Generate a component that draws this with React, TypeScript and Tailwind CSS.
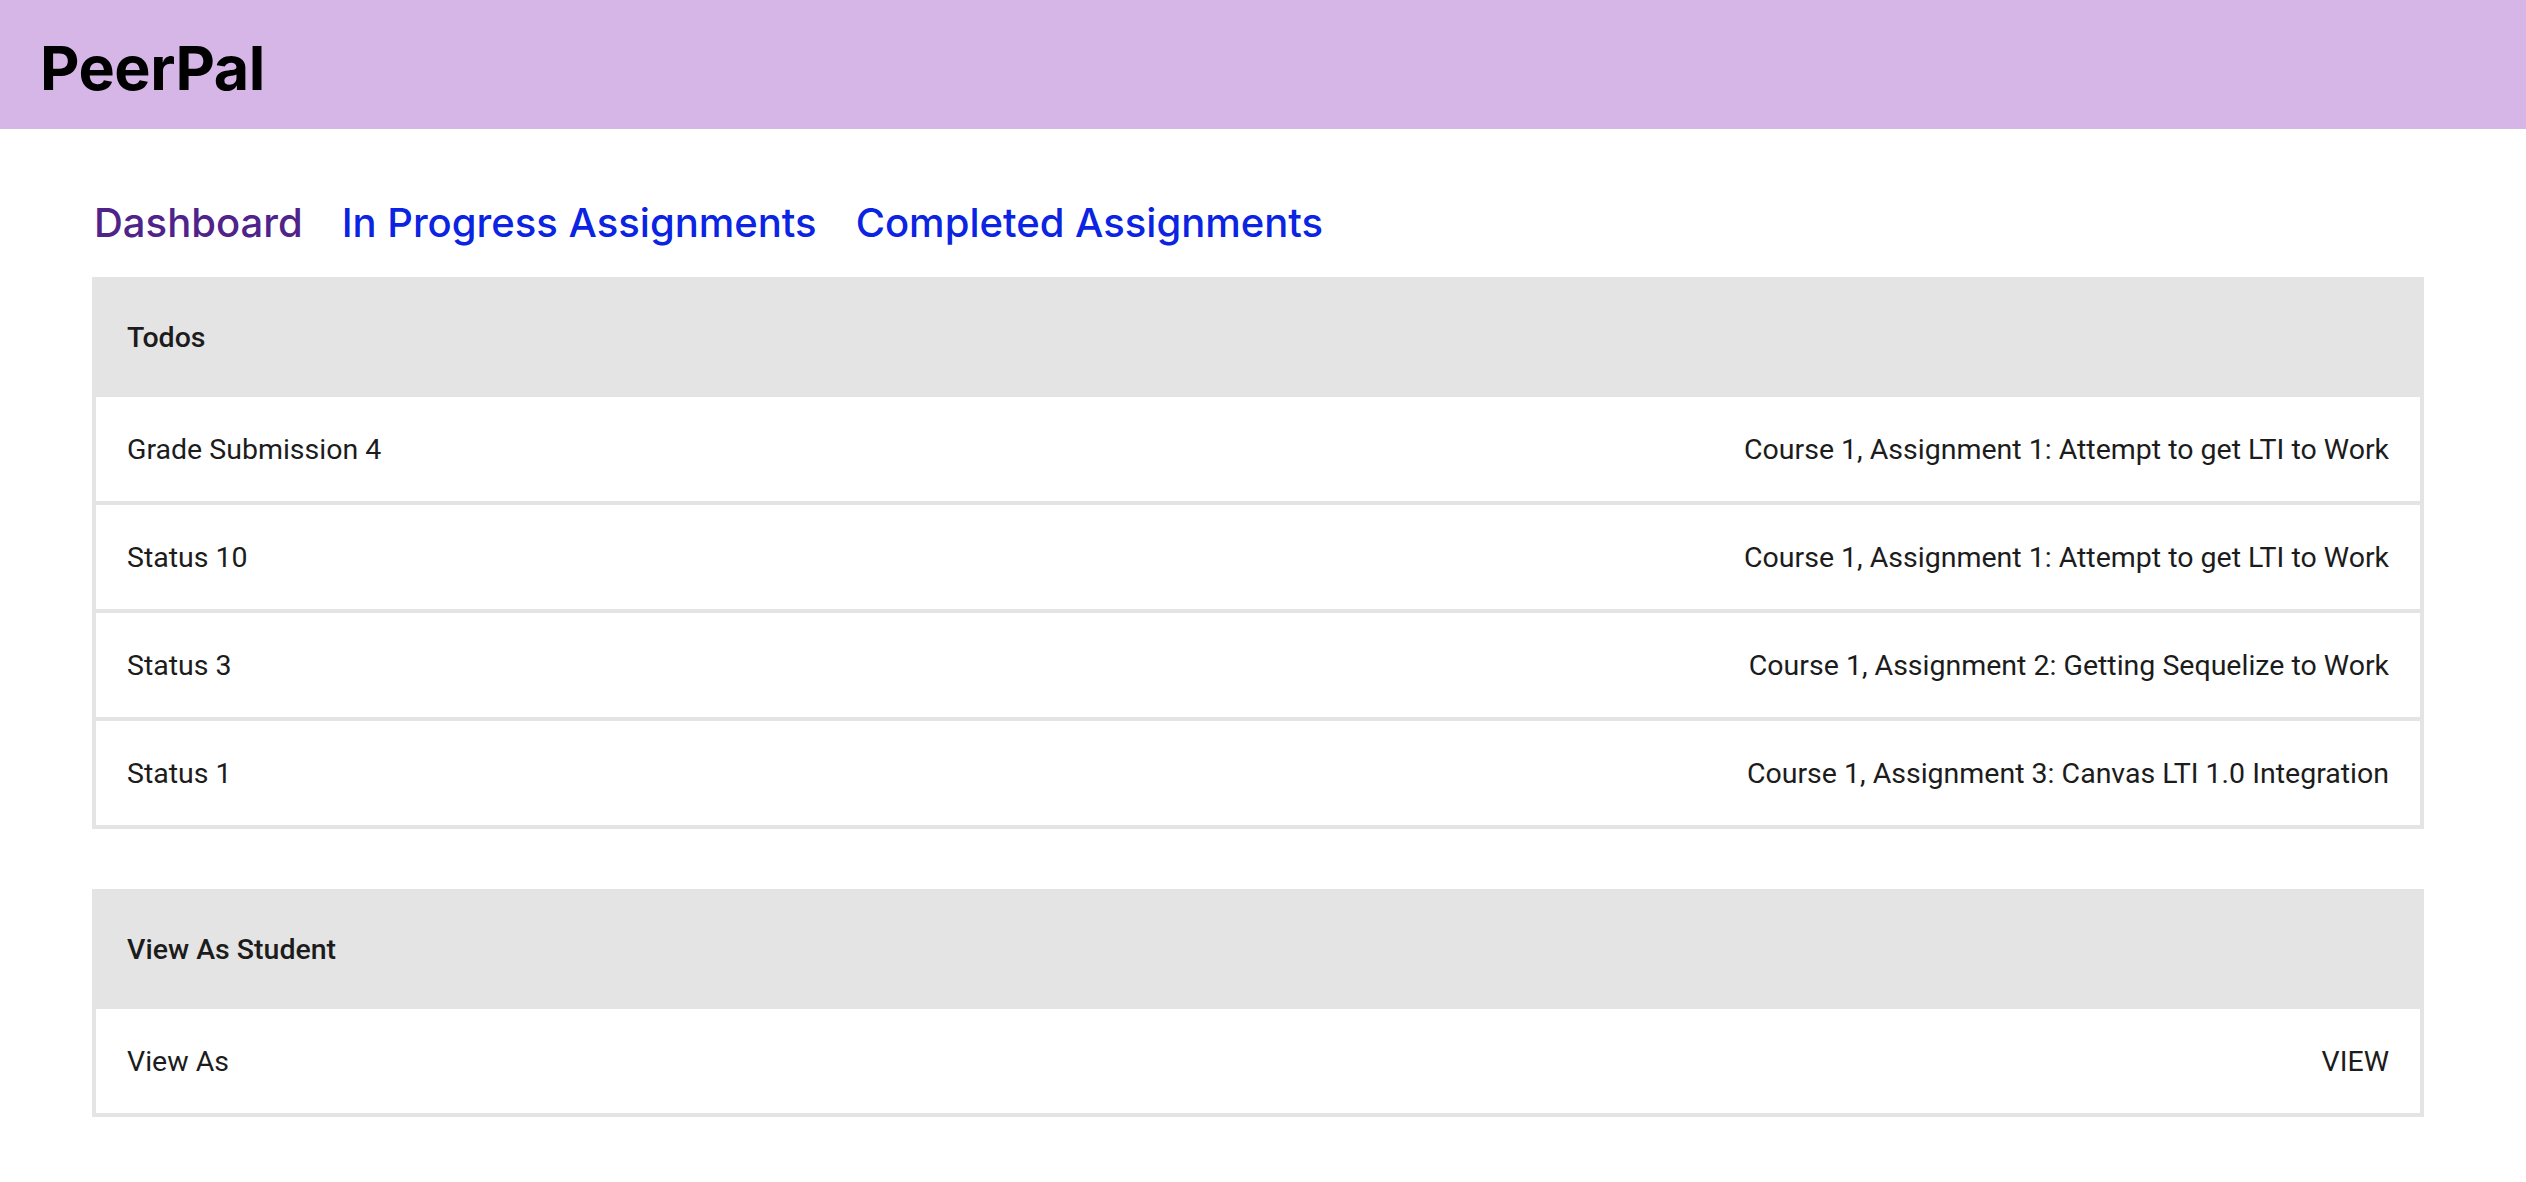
import React from 'react';

const todos = [
  { title: 'Grade Submission 4', assignment: 'Course 1, Assignment 1: Attempt to get LTI to Work' },
  { title: 'Status 10', assignment: 'Course 1, Assignment 1: Attempt to get LTI to Work' },
  { title: 'Status 3', assignment: 'Course 1, Assignment 2: Getting Sequelize to Work' },
  { title: 'Status 1', assignment: 'Course 1, Assignment 3: Canvas LTI 1.0 Integration' },
];

function Card({ title, children }: { title: string; children: React.ReactNode }) {
  return (
    <div className="bg-[#e4e4e4]">
      <div className="h-[120px] flex items-center px-[35px] pt-[2px] text-[28.5px] font-medium text-[#1c1c1c]">
        {title}
      </div>
      <div className="flex flex-col gap-[4px] px-[4px] pb-[4px]">{children}</div>
    </div>
  );
}

function Row({ left, right }: { left: string; right: string }) {
  return (
    <div className="h-[104px] bg-white flex items-center justify-between px-[31px] pt-[2px] text-[28.5px] text-[#1c1c1c]">
      <span>{left}</span>
      <span>{right}</span>
    </div>
  );
}

export default function App() {
  return (
    <div className="min-h-screen bg-white font-['Roboto',sans-serif]">
      {/* Header */}
      <header className="h-[129px] bg-[#d6b6e6] flex items-center px-[40px] pt-[8px]">
        <h1 className="font-['Inter',sans-serif] text-[61px] font-bold text-black tracking-[-0.5px]">PeerPal</h1>
      </header>

      <main className="ml-[92px] w-[2332px]">
        {/* Nav */}
        <nav className="mt-[70px] mb-[30px] pl-[2px] flex gap-[39px] font-['Inter',sans-serif] text-[40px] font-medium leading-[48px]">
          <a href="#" className="text-[#4f238a]">Dashboard</a>
          <a href="#" className="text-[#0b23e2]">In Progress Assignments</a>
          <a href="#" className="text-[#0b23e2]">Completed Assignments</a>
        </nav>

        <Card title="Todos">
          {todos.map((t, i) => (
            <Row key={i} left={t.title} right={t.assignment} />
          ))}
        </Card>

        <div className="mt-[60px]">
          <Card title="View As Student">
            <Row left="View As" right="VIEW" />
          </Card>
        </div>
      </main>
    </div>
  );
}
